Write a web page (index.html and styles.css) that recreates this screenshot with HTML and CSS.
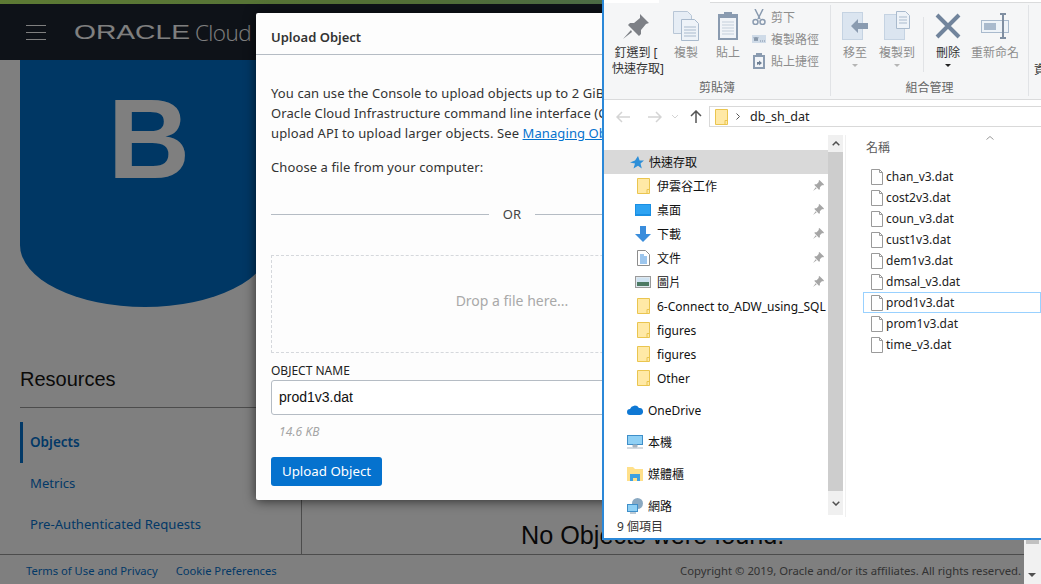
FILE: index.html
```html
<!DOCTYPE html>
<html lang="en">
<head>
  <meta charset="UTF-8" />
  <title>Upload Object</title>
  <link rel="stylesheet" href="styles.css">
</head>
<body>

<svg class="defs" width="0" height="0">
  <symbol id="folder" viewBox="0 0 13 16">
    <path d="M.5.5h12v15H.5z" fill="#ffe9a6" stroke="#eac54f"/>
    <path d="M10 15.5v-4h2.500" fill="none" stroke="#eac54f"/>
  </symbol>
  <symbol id="file" viewBox="0 0 12 16">
    <path d="M.5.5h8l3 3v12H.5z" fill="#fff" stroke="#9a9a9a"/>
    <path d="M8.500.5v3h3" fill="none" stroke="#9a9a9a"/>
  </symbol>
  <symbol id="pin" viewBox="0 0 12 12">
    <path d="M7 0l5 5-1 1-1-.5L7.500 8 7.500 10 6.500 10.500 1.500 5.500 2 4.500 4 4.500 6.500 2 6 1z M3 8L0 12l4-3z" fill="#a6a6a6"/>
  </symbol>
</svg>

<div class="strip"></div>
<header class="topbar">
  <div class="burger"><i></i><i></i><i></i></div>
  <div class="logo"><span class="logo-o">ORACLE</span><span class="logo-c">Cloud</span></div>
</header>

<main class="page">
  <aside class="side">
    <div class="tile">B</div>
    <h2 class="res-title">Resources</h2>
    <nav class="res-list">
      <a class="res-item active">Objects</a>
      <a class="res-item">Metrics</a>
      <a class="res-item">Pre-Authenticated Requests</a>
    </nav>
  </aside>
  <section class="content">
    <p class="empty">No Objects were found.</p>
  </section>
</main>

<footer class="foot">
  <a>Terms of Use and Privacy</a>
  <a>Cookie Preferences</a>
  <span class="copy">Copyright © 2019, Oracle and/or its affiliates. All rights reserved.</span>
</footer>

<div class="overlay"></div>

<div class="pagebar"><i></i><b></b></div>

<div class="modal">
  <div class="modal-head">Upload Object</div>
  <div class="modal-body">
    <p class="intro">You can use the Console to upload objects up to 2 GiB. To upload larger objects, use the<br>
    Oracle Cloud Infrastructure command line interface (CLI) or the multipart<br>
    upload API to upload larger objects. See <a>Managing Objects</a> for details.</p>
    <p class="choose">Choose a file from your computer:</p>
    <div class="or"><span>OR</span></div>
    <div class="drop">Drop a file here...</div>
    <label class="name-label">OBJECT NAME</label>
    <div class="name-input">prod1v3.dat</div>
    <div class="size">14.6 KB</div>
    <button class="primary">Upload Object</button>
  </div>
</div>

<div class="explorer">
  <div class="tabs"><span class="tab-a"></span><span class="tab-b"></span><span class="tab-c"></span></div>

  <div class="ribbon">
    <div class="group g1">
      <div class="btns">
        <div class="big w48">
          <svg width="28" height="28" viewBox="0 0 28 28"><path d="M18 2l9 9-3 1-5 6 0 4-2 2-11-11 2-2 4 0 6-5z M9 18L1 27l9-7z" fill="#7d8086"/></svg>
          <span class="dark">釘選到 [<br>快速存取]</span>
        </div>
        <div class="big w44 ml4">
          <svg width="26" height="30" viewBox="0 0 26 30"><path d="M.5.5h14l4 4v18H.5z" fill="#e6edf5" stroke="#b8c6d6"/><path d="M8.500 8.500h13l4 4v17h-17z" fill="#eef3f8" stroke="#a9bacd"/><path d="M11 16h12M11 19h12M11 22h12M11 25h12" stroke="#a9bacd"/></svg>
          <span>複製</span>
        </div>
        <div class="big w40">
          <svg width="22" height="30" viewBox="0 0 22 30"><rect x="1" y="3" width="20" height="26" fill="#8a9bb0"/><rect x="3" y="7" width="16" height="20" fill="#f1f4f8"/><path d="M5 11h12M5 14h12M5 17h12M5 20h12M5 23h12" stroke="#c4cfdb"/><rect x="7" y="1" width="8" height="5" fill="#8a9bb0"/></svg>
          <span>貼上</span>
        </div>
        <div class="smalls">
          <div class="small"><svg width="14" height="16" viewBox="0 0 14 16"><path d="M3 0l5 10M11 0L6 10" stroke="#8a9bb0" stroke-width="1.500"/><circle cx="3.500" cy="13" r="2.500" fill="none" stroke="#8a9bb0" stroke-width="1.500"/><circle cx="10.500" cy="13" r="2.500" fill="none" stroke="#8a9bb0" stroke-width="1.500"/></svg>剪下</div>
          <div class="small"><svg width="14" height="8" viewBox="0 0 14 8"><rect width="14" height="8" fill="#cfdbe8"/><path d="M2 2l1 4 1-4 1 4 1-4M8 6h1M10 6h1M12 6h1" stroke="#6d7f94" fill="none" stroke-width=".8"/></svg>複製路徑</div>
          <div class="small"><svg width="14" height="16" viewBox="0 0 14 16"><rect x="1" y="2" width="12" height="14" fill="#8a9bb0"/><rect x="3" y="4" width="8" height="10" fill="#f1f4f8"/><rect x="4" y="0" width="6" height="3" fill="#8a9bb0"/><path d="M5 12l0-3 2 0 0-1.500L10 10 7 12.500 7 11z" fill="#6d7f94"/></svg>貼上捷徑</div>
        </div>
      </div>
      <div class="group-label">剪貼簿</div>
    </div>

    <div class="group g2">
      <div class="btns">
        <div class="big w40">
          <svg width="26" height="30" viewBox="0 0 26 30"><rect x=".5" y="1.500" width="20" height="27" fill="#dbe5f0" stroke="#c5d3e2"/><path d="M9 15l7-7v4h10v6H16v4z" fill="#8a9bb0"/></svg>
          <span>移至</span>
          <em class="caret"></em>
        </div>
        <div class="big w40 ml2">
          <svg width="26" height="30" viewBox="0 0 26 30"><rect x=".5" y="3.500" width="20" height="25" fill="#dbe5f0" stroke="#c5d3e2"/><path d="M12.500.5h9l4 4v13h-13z" fill="#eef3f8" stroke="#a9bacd"/><path d="M15 6h8M15 9h8M15 12h8" stroke="#a9bacd"/></svg>
          <span>複製到</span>
          <em class="caret"></em>
        </div>
        <div class="sep"></div>
        <div class="big w40 ml4">
          <svg width="26" height="26" viewBox="0 0 26 26"><path d="M2 2l22 22M24 2L2 24" stroke="#71849c" stroke-width="4"/></svg>
          <span class="dark">刪除</span>
          <em class="caret dark-caret"></em>
        </div>
        <div class="big w50 ml2">
          <svg width="28" height="26" viewBox="0 0 28 26"><rect x=".5" y="7.500" width="27" height="12" fill="#eef3f8" stroke="#a9bacd"/><rect x="3" y="10" width="12" height="7" fill="#a9bacd"/><path d="M19 1h3M22 1h3M22 1v24M19 25h6" stroke="#7f8ea1" stroke-width="2" fill="none"/></svg>
          <span>重新命名</span>
        </div>
      </div>
      <div class="group-label">組合管理</div>
    </div>

    <div class="group g3"><span class="cut">資</span></div>
  </div>

  <div class="addr-row">
    <svg class="nav-a" width="14" height="12" viewBox="0 0 14 12"><path d="M6 1L1 6l5 5M1 6h13" fill="none" stroke="#d4d4d4" stroke-width="1.500"/></svg>
    <svg class="nav-b" width="14" height="12" viewBox="0 0 14 12"><path d="M8 1l5 5-5 5M13 6H0" fill="none" stroke="#d4d4d4" stroke-width="1.500"/></svg>
    <svg class="nav-c" width="8" height="5" viewBox="0 0 8 5"><path d="M1 1l3 3 3-3" fill="none" stroke="#d4d4d4"/></svg>
    <svg class="nav-d" width="12" height="13" viewBox="0 0 12 13"><path d="M1 6l5-5 5 5M6 1v12" fill="none" stroke="#555" stroke-width="1.500"/></svg>
    <div class="addr">
      <svg width="13" height="16" class="addr-folder"><use href="#folder"/></svg>
      <svg class="addr-chev" width="4" height="7" viewBox="0 0 4 7"><path d="M.5.5l3 3-3 3" fill="none" stroke="#555"/></svg>
      <span>db_sh_dat</span>
    </div>
  </div>

  <div class="panes">
    <div class="tree">
      <div class="row top selected">
        <svg class="ico-top" width="14" height="13" viewBox="0 0 14 13"><path d="M8 0l1.600 4.500H14l-3.500 3 1.300 5L8 9.800 3.500 12.500 5 7.500 0 6.500l5-2z" fill="#2e8fd8"/></svg>
        快速存取
      </div>
      <div class="row child"><svg width="13" height="16"><use href="#folder"/></svg><span class="lbl">伊雲谷工作</span><svg class="pin" width="11" height="11"><use href="#pin"/></svg></div>
      <div class="row child"><svg class="wide" width="16" height="12" viewBox="0 0 16 12"><rect width="16" height="12" fill="#1a8fe3"/><rect x="1" y="1" width="14" height="9" fill="#2ea3f2"/></svg><span class="lbl">桌面</span><svg class="pin" width="11" height="11"><use href="#pin"/></svg></div>
      <div class="row child"><svg class="wide" width="16" height="16" viewBox="0 0 16 16"><path d="M5 0h6v8h5l-8 8-8-8h5z" fill="#3a8ddc"/></svg><span class="lbl">下載</span><svg class="pin" width="11" height="11"><use href="#pin"/></svg></div>
      <div class="row child"><svg width="13" height="16" viewBox="0 0 13 16"><path d="M.5.500h8l4 4v11H.5z" fill="#fff" stroke="#8d8d8d"/><path d="M3 5h4M3 7h7M3 9h7M3 11h7M3 13h7" stroke="#3a8ddc"/></svg><span class="lbl">文件</span><svg class="pin" width="11" height="11"><use href="#pin"/></svg></div>
      <div class="row child"><svg class="wide" width="16" height="12" viewBox="0 0 16 12"><rect x=".5" y=".5" width="15" height="11" fill="#dfe8ef" stroke="#9a9a9a"/><rect x="2" y="2" width="12" height="4" fill="#cfe3f2"/><rect x="2" y="6" width="12" height="4" fill="#4c7a64"/></svg><span class="lbl">圖片</span><svg class="pin" width="11" height="11"><use href="#pin"/></svg></div>
      <div class="row child"><svg width="13" height="16"><use href="#folder"/></svg><span class="lbl">6-Connect to_ADW_using_SQL</span></div>
      <div class="row child"><svg width="13" height="16"><use href="#folder"/></svg><span class="lbl">figures</span></div>
      <div class="row child"><svg width="13" height="16"><use href="#folder"/></svg><span class="lbl">figures</span></div>
      <div class="row child"><svg width="13" height="16"><use href="#folder"/></svg><span class="lbl">Other</span></div>
      <div class="row top gap"><svg class="ico-top2" width="16" height="10" viewBox="0 0 16 10"><path d="M3 10a3 3 0 0 1 0-6 5 5 0 0 1 9-1 3.500 3.500 0 0 1 1 7z" fill="#0f78d4"/></svg>OneDrive</div>
      <div class="row top gap"><svg class="ico-top2" width="16" height="14" viewBox="0 0 16 14"><rect width="16" height="10" fill="#3f8fc9"/><rect x="1" y="1" width="14" height="8" fill="#8fd0f5"/><path d="M6 10h4v2H6zM0 13h16" stroke="#a8b4bf" fill="#a8b4bf"/></svg>本機</div>
      <div class="row top gap"><svg class="ico-top2" width="16" height="14" viewBox="0 0 16 14"><path d="M0 0h6l2 2h8v12H0z" fill="#ffe08a"/><path d="M3 7h10v7h-3v-3H6v3H3z" fill="#3ea0e0"/></svg>媒體櫃</div>
      <div class="row top gap"><svg class="ico-top2" width="16" height="16" viewBox="0 0 16 16"><circle cx="10.500" cy="5.500" r="5.500" fill="#8aa9c2"/><rect y="6" width="11" height="8" fill="#3f8fc9"/><rect x="1" y="7" width="9" height="6" fill="#8fd0f5"/><path d="M3 15h6" stroke="#7f98ad"/></svg>網路</div>
    </div>

    <div class="tree-scroll">
      <div class="arrow"><svg width="8" height="5" viewBox="0 0 8 5"><path d="M.7 4.300L4 1l3.300 3.300" fill="none" stroke="#505050" stroke-width="1.500"/></svg></div>
      <div class="thumb"></div>
      <div class="arrow tall"><svg width="8" height="5" viewBox="0 0 8 5"><path d="M.7.700L4 4 7.300.700" fill="none" stroke="#505050" stroke-width="1.500"/></svg></div>
    </div>

    <div class="files">
      <div class="col-head">
        <svg class="sort" width="8" height="4" viewBox="0 0 8 4"><path d="M.5 3.500L4 .5l3.500 3" fill="none" stroke="#9a9a9a"/></svg>
        <span>名稱</span>
      </div>
      <div class="file"><svg width="12" height="16"><use href="#file"/></svg>chan_v3.dat</div>
      <div class="file"><svg width="12" height="16"><use href="#file"/></svg>cost2v3.dat</div>
      <div class="file"><svg width="12" height="16"><use href="#file"/></svg>coun_v3.dat</div>
      <div class="file"><svg width="12" height="16"><use href="#file"/></svg>cust1v3.dat</div>
      <div class="file"><svg width="12" height="16"><use href="#file"/></svg>dem1v3.dat</div>
      <div class="file"><svg width="12" height="16"><use href="#file"/></svg>dmsal_v3.dat</div>
      <div class="file focus"><svg width="12" height="16"><use href="#file"/></svg>prod1v3.dat</div>
      <div class="file"><svg width="12" height="16"><use href="#file"/></svg>prom1v3.dat</div>
      <div class="file"><svg width="12" height="16"><use href="#file"/></svg>time_v3.dat</div>
    </div>
  </div>

  <div class="status"><span>9 個項目</span></div>
</div>

</body>
</html>
```

FILE: styles.css
```css
* {
  box-sizing: border-box;
}

html, body {
  margin: 0;
  height: 584px;
  overflow: hidden;
}

body {
  display: flex;
  flex-direction: column;
  background: #fff;
  font-family: "Noto Sans", "Liberation Sans", sans-serif;
  font-size: 13px;
  color: #161513;
}

.defs {
  position: absolute;
}

.strip {
  height: 4px;
  flex: none;
  background: linear-gradient(90deg, #baf468, #a6e070 40%, #90d4a0 70%);
}

.topbar {
  height: 56px;
  flex: none;
  display: flex;
  align-items: center;
  padding-left: 26px;
  background: #1c2430;
}

.burger {
  width: 20px;
  display: flex;
  flex-direction: column;
  gap: 6px;
}

.burger i {
  height: 1px;
  background: #fff;
}

.logo {
  margin-left: 28px;
  display: flex;
  align-items: center;
  color: #fff;
}

.logo-o {
  display: inline-block;
  width: 121px;
  font: 20px "Liberation Sans", sans-serif;
  transform: scaleX(1.41);
  transform-origin: left center;
}

.logo-c {
  font: 300 22.500px "Open Sans", sans-serif;
  letter-spacing: -.6px;
}

.page {
  flex: 1;
  display: flex;
  min-height: 0;
}

.side {
  width: 302px;
  flex: none;
  padding-left: 20px;
  border-right: 1px solid #999;
}

.tile {
  width: 250px;
  height: 247px;
  padding: 15px 0 0 8px;
  border-radius: 0 0 125px 125px / 0 0 62px 62px;
  background: #006ec8;
  color: #fff;
  font: bold 114px/128px "Liberation Sans", sans-serif;
  text-align: center;
}

.res-title {
  margin: 59px 0 0;
  width: 260px;
  padding-bottom: 15px;
  border-bottom: 1px solid #999;
  font: 20px/26px "Liberation Sans", sans-serif;
}

.res-list {
  margin-top: 14px;
}

.res-item {
  display: block;
  height: 41px;
  padding-left: 10px;
  line-height: 41px;
  color: #0572ce;
  font-size: 13.100px;
}

.res-item.active {
  border-left: 3px solid #0572ce;
  padding-left: 7px;
  font-size: 13.500px;
  font-weight: 600;
}

.content {
  flex: 1;
  display: flex;
  align-items: flex-end;
  padding-left: 219px;
}

.empty {
  margin: 0;
  font: 25.200px/36px "Liberation Sans", sans-serif;
  color: #111;
  position: relative;
  top: -1px;
}

.foot {
  height: 30px;
  flex: none;
  display: flex;
  align-items: center;
  gap: 18px;
  padding: 2px 20px 0 26px;
  border-top: 1px solid #999;
  font-size: 11.200px;
  color: #0572ce;
}

.copy {
  margin-left: auto;
  font-size: 11.300px;
  color: #666;
}

.overlay {
  position: absolute;
  inset: 0;
  background: rgba(0, 0, 0, .5);
}

.pagebar {
  position: absolute;
  right: 0;
  top: 539px;
  bottom: 0;
  width: 17px;
  background: #f1f1f1;
}

.pagebar i {
  display: block;
  margin: 0 2px;
  height: 5px;
  background: #c1c1c1;
}

.pagebar b {
  position: absolute;
  left: 4px;
  bottom: 7px;
  border: 4px solid transparent;
  border-top: 4px solid #505050;
  border-bottom: 0;
}

.modal {
  position: absolute;
  left: 256px;
  top: 13px;
  width: 512px;
  height: 487px;
  background: #fdfdfd;
  border-radius: 2px;
  box-shadow: 0 1px 12px rgba(0, 0, 0, .65);
}

.modal-head {
  height: 42px;
  padding: 0 15px;
  border-bottom: 1px solid #b5bcc4;
  line-height: 48px;
  font-weight: 600;
  color: #333;
}

.modal-body {
  padding: 28px 15px 0;
  letter-spacing: .1px;
}

.intro {
  margin: 0;
  line-height: 20px;
  white-space: nowrap;
  color: #333;
}

.intro a {
  color: #0572ce;
  text-decoration: underline;
}

.choose {
  margin: 14px 0 0;
  line-height: 20px;
  color: #333;
}

.or {
  margin-top: 27px;
  height: 20px;
  display: flex;
  align-items: center;
  gap: 14px;
  color: #444;
}

.or::before, .or::after {
  content: "";
  flex: 1;
  height: 1px;
  background: #b5bcc4;
}

.drop {
  margin-top: 31px;
  height: 98px;
  padding-bottom: 8px;
  border: 1px dashed #d5d8dc;
  display: flex;
  align-items: center;
  justify-content: center;
  font-size: 14px;
  letter-spacing: 0;
  color: #a9a9a9;
}

.name-label {
  display: block;
  margin-top: 10px;
  line-height: 16px;
  font-size: 12px;
  letter-spacing: 0;
  color: #222;
}

.name-input {
  margin-top: 1px;
  height: 35px;
  padding-left: 7px;
  border: 1px solid #b5bcc4;
  border-radius: 3px;
  background: #fff;
  font: 14px/33px "Liberation Sans", sans-serif;
  letter-spacing: 0;
  color: #111;
}

.size {
  margin-top: 8px;
  padding-left: 8px;
  line-height: 18px;
  font-size: 12px;
  font-style: italic;
  color: #a5a5a5;
}

.primary {
  display: block;
  margin-top: 16px;
  width: 111px;
  height: 29px;
  padding: 0 0 2px;
  border: 0;
  border-radius: 3px;
  background: #0572ce;
  color: #fff;
  font: 13.300px "Noto Sans", sans-serif;
}

.explorer {
  position: absolute;
  left: 602px;
  top: 0;
  width: 439px;
  height: 540px;
  display: flex;
  flex-direction: column;
  overflow: hidden;
  background: #fff;
  border-left: 2px solid #2b88d8;
  border-bottom: 2px solid #2b88d8;
  font-family: "Noto Sans", "Noto Sans CJK TC", sans-serif;
  font-size: 12px;
  color: #111;
}

.tabs {
  height: 3px;
  flex: none;
  display: flex;
  background: #f5f6f7;
}

.tab-a {
  width: 55px;
  background: #fff;
}

.tab-b {
  width: 51px;
}

.tab-c {
  flex: 1;
  background: #fff;
  border-bottom: 1px solid #dadbdc;
}

.ribbon {
  height: 97px;
  flex: none;
  display: flex;
  padding-top: 2px;
  background: #f5f6f7;
  border-bottom: 1px solid #dadbdc;
}

.group {
  height: 91px;
  flex: none;
  display: flex;
  flex-direction: column;
  border-right: 1px solid #e1e3e6;
}

.g1 {
  width: 227px;
  padding-left: 8px;
}

.g2 {
  width: 198px;
  padding-left: 4px;
}

.g3 {
  flex: 1;
  min-width: 0;
  overflow: hidden;
  padding: 55px 0 0 5px;
  border: 0;
}

.btns {
  flex: 1;
  display: flex;
}

.big {
  position: relative;
  height: 70px;
  padding-top: 6px;
  text-align: center;
  line-height: 16px;
  color: #8d8d8d;
}

.big svg {
  display: block;
  height: 30px;
  margin: 0 auto 4px;
}

.big span {
  display: block;
  white-space: nowrap;
}

.dark {
  color: #333;
}

.caret {
  position: absolute;
  left: 50%;
  top: 59px;
  margin-left: -3px;
  border: 3px solid transparent;
  border-top: 3px solid #b5b5b5;
  border-bottom: 0;
}

.dark-caret {
  border-top-color: #222;
}

.w40 { width: 40px; }
.w44 { width: 44px; }
.w48 { width: 48px; }
.w50 { width: 50px; }
.ml2 { margin-left: 2px; }
.ml4 { margin-left: 4px; }

.smalls {
  margin-left: 4px;
  padding-top: 3px;
  display: flex;
  flex-direction: column;
  gap: 5px;
}

.small {
  height: 17px;
  display: flex;
  align-items: center;
  gap: 5px;
  white-space: nowrap;
  color: #8d8d8d;
}

.small svg {
  width: 14px;
}

.sep {
  width: 1px;
  height: 55px;
  margin: 12px 0 0 6px;
  background: #e1e3e6;
}

.group-label {
  text-align: center;
  line-height: 16px;
  color: #666;
}

.g1 .group-label {
  margin-left: -8px;
}

.g2 .group-label {
  margin-left: -4px;
}

.cut {
  color: #333;
}

.addr-row {
  height: 34px;
  flex: none;
  display: flex;
  align-items: center;
  padding: 0 0 1px 12px;
}

.nav-b {
  margin-left: 18px;
}

.nav-c {
  margin-left: 9px;
}

.nav-d {
  margin-left: 11px;
}

.addr {
  margin-left: 7px;
  flex: 1;
  height: 21px;
  display: flex;
  align-items: center;
  padding-left: 5px;
  border: 1px solid #d9d9d9;
  border-right: 0;
  font-size: 12.500px;
  color: #222;
}

.addr-chev {
  margin: 0 10px 0 8px;
}

.panes {
  flex: 1;
  min-height: 0;
  display: flex;
  padding-top: 1px;
}

.tree {
  width: 224px;
  flex: none;
  padding-top: 15px;
  overflow: hidden;
}

.row {
  height: 24px;
  position: relative;
  display: flex;
  align-items: center;
  white-space: nowrap;
}

.selected {
  background: #d9d9d9;
}

.top {
  padding-left: 26px;
}

.top svg {
  width: 14px;
  margin-right: 5px;
}

.top .ico-top2 {
  width: 16px;
  margin: 0 5px 0 -3px;
}

.gap {
  margin-top: 8px;
}

.child {
  padding-left: 33px;
}

.child svg {
  flex: none;
}

.child .wide {
  margin-left: -2px;
  margin-right: -1px;
}

.lbl {
  margin-left: 7px;
}

.pin {
  position: absolute;
  left: 209px;
  top: 6px;
}

.tree-scroll {
  width: 15px;
  margin-left: 0;
  height: 380px;
  flex: none;
  display: flex;
  flex-direction: column;
  background: #f0f0f0;
}

.arrow {
  height: 17px;
  display: flex;
  align-items: center;
  justify-content: center;
}

.arrow.tall {
  height: 24px;
}

.thumb {
  flex: 1;
  background: #cdcdcd;
}

.files {
  flex: 1;
  padding-left: 17px;
  border-left: 1px solid #f0f0f0;
  margin-left: 2px;
}

.col-head {
  position: relative;
  height: 31px;
  padding: 3px 0 0 3px;
  color: #5a5a5a;
}

.sort {
  position: absolute;
  left: 123px;
  top: 1px;
}

.file {
  height: 21px;
  display: flex;
  align-items: center;
  gap: 3px;
  padding-left: 8px;
  white-space: nowrap;
  color: #222;
}

.file.focus {
  outline: 1px solid #99d1ff;
  outline-offset: -1px;
}

.status {
  height: 21px;
  flex: none;
  padding-left: 13px;
  line-height: 20px;
  color: #333;
}
```
